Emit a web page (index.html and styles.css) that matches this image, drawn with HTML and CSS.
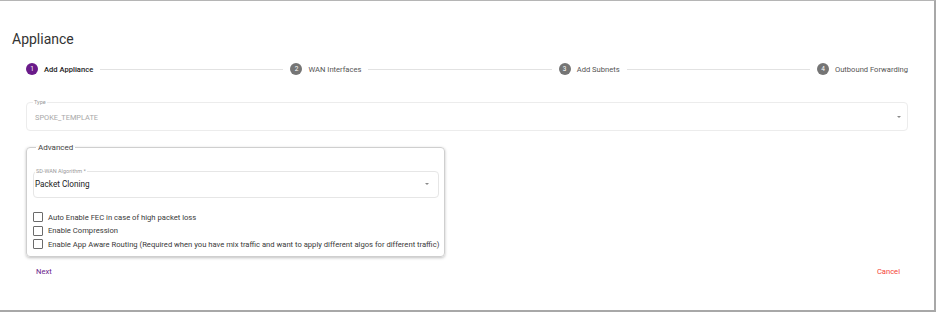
FILE: index.html
```html
<!DOCTYPE html>
<html lang="en">
<head>
  <meta charset="UTF-8">
  <title>Appliance</title>
  <link rel="stylesheet" href="styles.css">
</head>
<body>
  <div class="dialog">
    <h1 class="title">Appliance</h1>

    <!-- Stepper -->
    <div class="stepper">
      <div class="step active"><span class="num">1</span><span class="label">Add Appliance</span></div>
      <div class="line"></div>
      <div class="step"><span class="num">2</span><span class="label">WAN Interfaces</span></div>
      <div class="line"></div>
      <div class="step"><span class="num">3</span><span class="label">Add Subnets</span></div>
      <div class="line"></div>
      <div class="step"><span class="num">4</span><span class="label">Outbound Forwarding</span></div>
    </div>

    <fieldset class="field disabled">
      <legend>Type</legend>
      <div class="field-row">
        <span class="value">SPOKE_TEMPLATE</span>
        <span class="arrow"></span>
      </div>
    </fieldset>

    <fieldset class="advanced">
      <legend>Advanced</legend>
      <fieldset class="field select">
        <legend>SD-WAN Algorithm *</legend>
        <div class="field-row">
          <span class="value">Packet Cloning</span>
          <span class="arrow"></span>
        </div>
      </fieldset>
      <div class="checks">
        <label class="check"><span class="box"></span>Auto Enable FEC in case of high packet loss</label>
        <label class="check"><span class="box"></span>Enable Compression</label>
        <label class="check"><span class="box"></span>Enable App Aware Routing (Required when you have mix traffic and want to apply different algos for different traffic)</label>
      </div>
    </fieldset>

    <div class="actions">
      <button class="btn next">Next</button>
      <button class="btn cancel">Cancel</button>
    </div>
  </div>
</body>
</html>
```

FILE: styles.css
```css
body {
  margin: 0;
  font-family: Roboto, "Liberation Sans", sans-serif;
  background: #fff;
  color: #333;
}
.dialog {
  box-sizing: border-box;
  width: 936px;
  height: 312px;
  border-top: 1px solid #b5b5b5;
  border-right: 2px solid #a8a8a8;
  border-bottom: 2px solid #a8a8a8;
  padding: 30px 26px 0 12px;
}
.title {
  margin: 0;
  font-size: 14px;
  line-height: 16px;
  font-weight: 400;
  color: #333;
}
.stepper {
  display: flex;
  align-items: center;
  margin: 16px 0 0 14px;
  height: 12px;
}
.step {
  display: flex;
  align-items: center;
  gap: 6px;
  font-size: 7.6px;
  color: #555;
}
.step .num {
  width: 12px;
  height: 12px;
  border-radius: 50%;
  background: #757575;
  color: #fff;
  font-size: 6.5px;
  display: flex;
  align-items: center;
  justify-content: center;
}
.step.active .num {
  background: #6a1b8a;
}
.step.active .label {
  color: #222;
  font-weight: 500;
}
.line {
  flex: 1;
  height: 1px;
  background: #e2e2e2;
  margin: 0 7px;
}
.field {
  margin: 0;
  border: 1px solid #ececec;
  border-radius: 4px;
  padding: 6px 8px 7px;
  min-width: 0;
}
.field legend {
  padding: 0 1px;
  margin-left: -2px;
  font-size: 5.5px;
  line-height: 6px;
  color: #9a9a9a;
}
.field-row {
  display: flex;
  align-items: center;
  justify-content: space-between;
  height: 12px;
}
.disabled {
  margin: 24px 0 0 14px;
  padding-right: 6px;
}
.disabled .value {
  font-size: 7.4px;
  color: #a8a8a8;
}
.arrow {
  width: 0;
  height: 0;
  border-left: 2.5px solid transparent;
  border-right: 2.5px solid transparent;
  border-top: 2.5px solid #8a8a8a;
}
.advanced {
  margin: 12px 0 0 14px;
  width: 419px;
  box-sizing: border-box;
  border: 1px solid #cfcfcf;
  border-radius: 4px;
  box-shadow: 0 1px 3px rgba(0, 0, 0, 0.25);
  padding: 16px 5px 7px 6px;
}
.advanced > legend {
  font-size: 8px;
  color: #444;
  padding: 0 2px;
  margin-left: 3px;
}
.select {
  border-color: #e6e6e6;
  padding: 3px 9px 6px 1px;
}
.select legend {
  margin-left: 0;
}
.select .value {
  font-size: 8.2px;
  color: #222;
}
.select .field-row {
  height: 14px;
}
.checks {
  display: flex;
  flex-direction: column;
  gap: 3.5px;
  margin-top: 14px;
}
.check {
  display: flex;
  align-items: center;
  gap: 5px;
  font-size: 7.65px;
  color: #3a3a3a;
  line-height: 9px;
  white-space: nowrap;
}
.check .box {
  width: 8px;
  height: 8px;
  border: 1px solid #6b6b6b;
  border-radius: 1px;
  flex: none;
}
.actions {
  display: flex;
  justify-content: space-between;
  margin: 8px 8px 0 24px;
}
.btn {
  background: none;
  border: none;
  padding: 2px 0;
  font-family: inherit;
  font-size: 7.6px;
  cursor: pointer;
}
.next {
  color: #6a1b8a;
}
.cancel {
  color: #f44336;
}
```
